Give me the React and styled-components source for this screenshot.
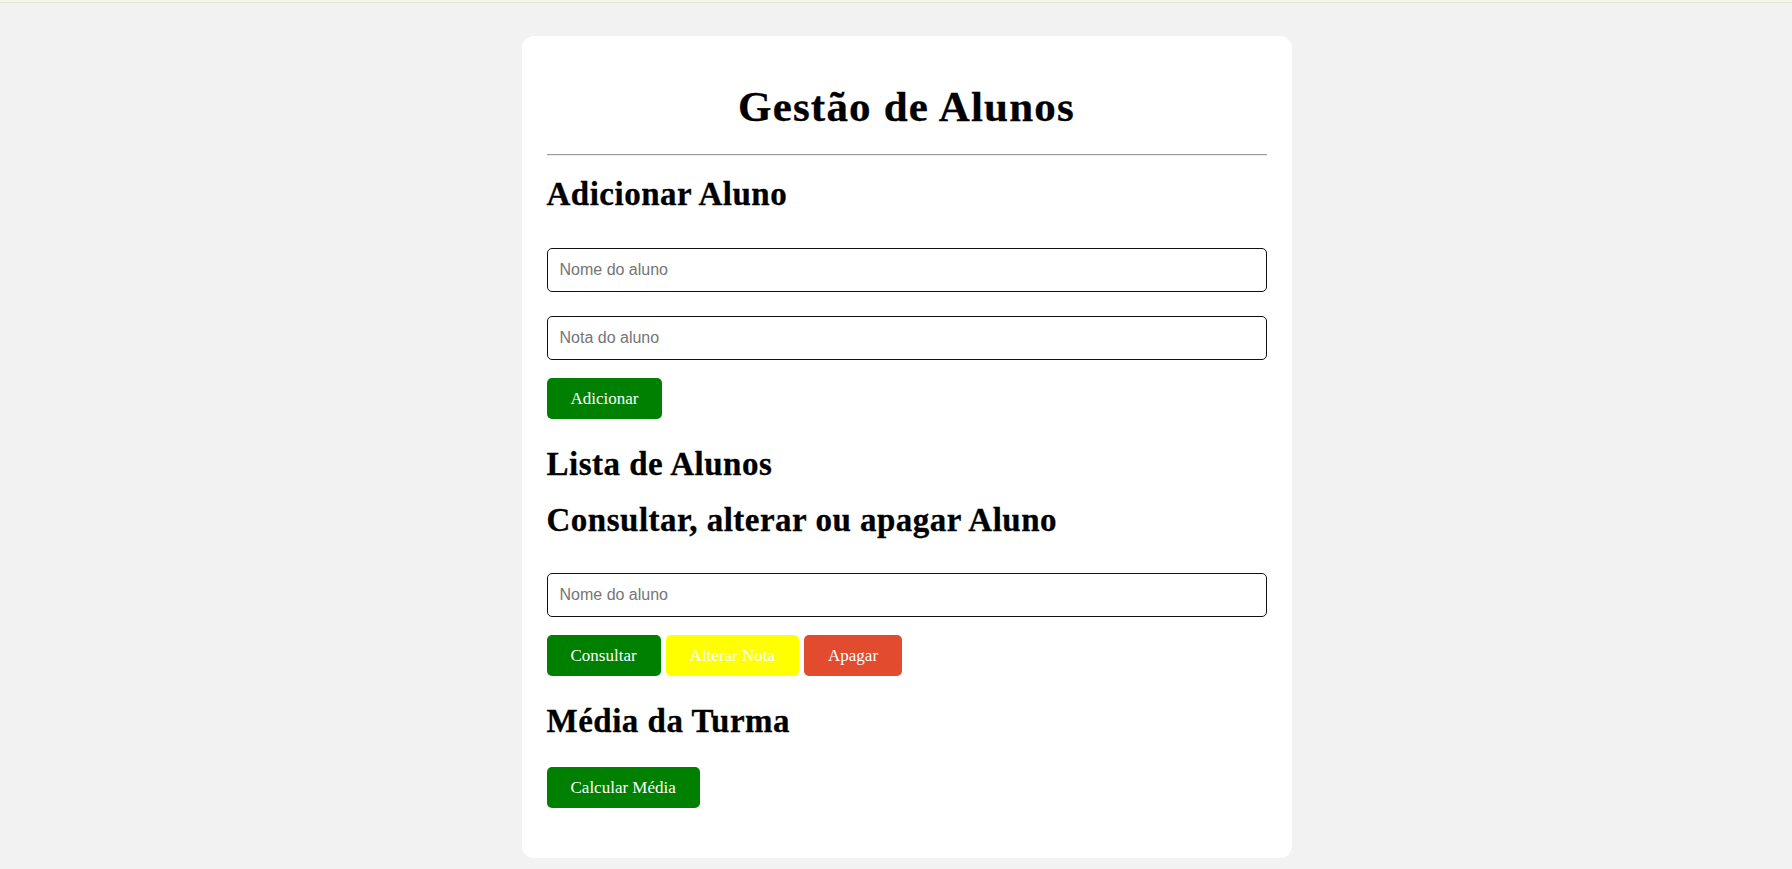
import { createGlobalStyle } from "styled-components";
import styled from "styled-components";

const GlobalStyle = createGlobalStyle`
  body {
    margin: 0;
    background: #f2f2f2;
    font-family: "Liberation Serif", "Times New Roman", serif;
  }
`;

const TopRule = styled.div`
  height: 2px;
  background: #f6f6ef;
  border-bottom: 1px solid #e2e6cf;
`;

const Main = styled.main`
  display: flex;
  justify-content: center;
  padding: 33px 0 11px 21px;
`;

const Card = styled.section`
  width: 770px;
  box-sizing: border-box;
  padding: 47px 25px 50px;
  background: #fff;
  border-radius: 12px;
  display: flex;
  flex-direction: column;
`;

const Title = styled.h1`
  margin: 0 0 23px;
  font-size: 43px;
  line-height: 48px;
  letter-spacing: 1.2px;
  text-align: center;
  color: #000;
  -webkit-text-stroke: 0.3px #000;
`;

const Divider = styled.hr`
  margin: 0 0 19px;
  height: 0;
  border: none;
  border-top: 1px solid #9a9a9a;
  border-bottom: 1px solid #ededed;
`;

const SectionTitle = styled.h2`
  margin: ${({ $top }) => $top || 0}px 0 0;
  font-size: 33px;
  line-height: 38px;
  letter-spacing: 0.5px;
  color: #000;
  -webkit-text-stroke: 0.3px #000;
`;

const Field = styled.input`
  display: block;
  width: 100%;
  height: 44px;
  box-sizing: border-box;
  margin: ${({ $top }) => $top || 0}px 0 0;
  padding: 0 12px;
  border: 1px solid #111;
  border-radius: 5px;
  background: #fff;
  font-family: "Liberation Sans", Arial, sans-serif;
  font-size: 16px;
  color: #222;
  outline: none;

  &::placeholder {
    color: #757575;
  }
`;

const ButtonRow = styled.div`
  display: flex;
  gap: 5px;
  margin-top: ${({ $top }) => $top || 0}px;
`;

const tones = {
  green: "#008000",
  yellow: "#ffff00",
  red: "#e34b2f"
};

const ActionButton = styled.button`
  height: 41px;
  padding: 0 24px;
  border: none;
  border-radius: 5px;
  background: ${({ $tone }) => tones[$tone] || tones.green};
  color: #fff;
  font-family: "Liberation Serif", "Times New Roman", serif;
  font-size: 17px;
  cursor: pointer;
`;

export default function App() {
  return (
    <>
      <GlobalStyle />
      <TopRule />
      <Main>
        <Card>
          <Title>Gestão de Alunos</Title>
          <Divider />

          <SectionTitle>Adicionar Aluno</SectionTitle>
          <Field $top={35} type="text" placeholder="Nome do aluno" />
          <Field $top={24} type="text" placeholder="Nota do aluno" />
          <ButtonRow $top={18}>
            <ActionButton $tone="green">Adicionar</ActionButton>
          </ButtonRow>

          <SectionTitle $top={26}>Lista de Alunos</SectionTitle>

          <SectionTitle $top={18}>Consultar, alterar ou apagar Aluno</SectionTitle>
          <Field $top={34} type="text" placeholder="Nome do aluno" />
          <ButtonRow $top={18}>
            <ActionButton $tone="green">Consultar</ActionButton>
            <ActionButton $tone="yellow">Alterar Nota</ActionButton>
            <ActionButton $tone="red">Apagar</ActionButton>
          </ButtonRow>

          <SectionTitle $top={26}>Média da Turma</SectionTitle>
          <ButtonRow $top={27}>
            <ActionButton $tone="green">Calcular Média</ActionButton>
          </ButtonRow>
        </Card>
      </Main>
    </>
  );
}
